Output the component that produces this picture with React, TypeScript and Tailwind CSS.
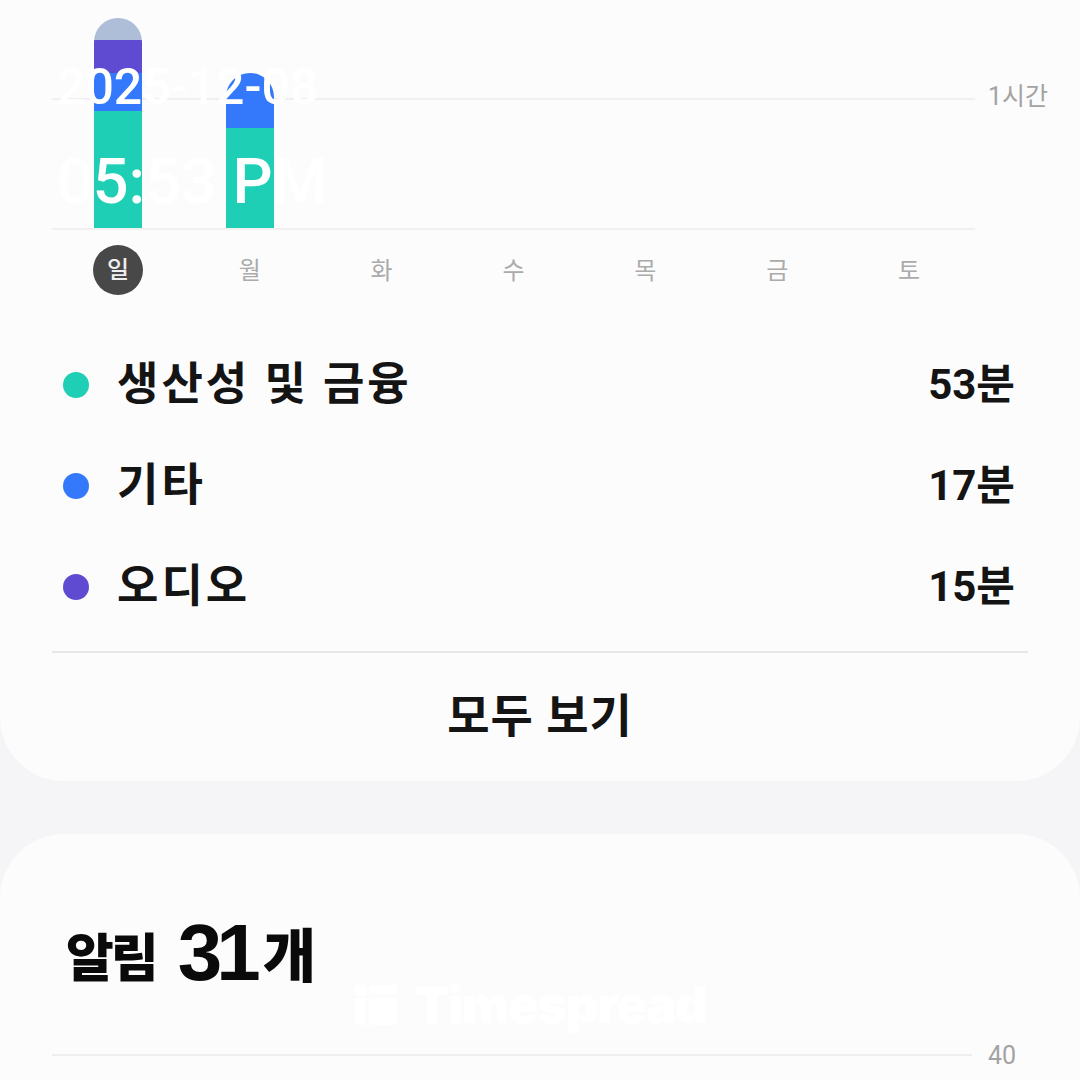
import React from "react";

const FONT = "font-['Roboto','Noto_Sans_CJK_KR',sans-serif]";

type Segment = { color: string; height: number };

const days = ["일", "월", "화", "수", "목", "금", "토"];

// stacked bars per day, bottom segment first
const bars: Segment[][] = [
  [
    { color: "bg-[#1ecfb5]", height: 117 },
    { color: "bg-[#3479fb]", height: 38 },
    { color: "bg-[#5f4bd2]", height: 33 },
    { color: "bg-[#aebdd8]", height: 22 },
  ],
  [
    { color: "bg-[#1ecfb5]", height: 100 },
    { color: "bg-[#3479fb]", height: 55 },
  ],
  [],
  [],
  [],
  [],
  [],
];

const legend = [
  { label: "생산성 및 금융", value: "53분", dot: "bg-[#1ecfb5]" },
  { label: "기타", value: "17분", dot: "bg-[#3479fb]" },
  { label: "오디오", value: "15분", dot: "bg-[#5f4bd2]" },
];

function Bar({ segments }: { segments: Segment[] }) {
  if (segments.length === 0) return null;
  return (
    <div className="flex w-[48px] flex-col-reverse overflow-hidden rounded-t-[24px]">
      {segments.map((s, i) => (
        <div key={i} className={s.color} style={{ height: s.height }} />
      ))}
    </div>
  );
}

function TimespreadMark() {
  return (
    <div className="pointer-events-none absolute left-[355px] top-[980px] flex items-center gap-[18px] text-white">
      <svg width="42" height="40" viewBox="0 0 42 40" fill="#ffffff">
        <rect x="0" y="0" width="11" height="11" rx="3" />
        <rect x="0" y="13" width="11" height="27" rx="1" />
        <rect x="14" y="0" width="28" height="9" rx="1" />
        <rect x="14" y="13" width="28" height="27" rx="1" />
      </svg>
      <span className="text-[50px] font-black leading-none tracking-[-1px] font-['Inter',sans-serif]">
        Timespread
      </span>
    </div>
  );
}

export default function App() {
  return (
    <div className={`relative flex h-[1080px] w-full flex-col overflow-hidden bg-[#f5f5f7] ${FONT}`}>
      {/* usage card */}
      <div className="rounded-b-[64px] bg-[#fcfcfc] pt-[18px]">
        {/* chart */}
        <div className="relative mx-[52px] w-[923px]">
          <div className="absolute left-0 right-0 top-[80px] h-[2px] bg-[#f0f0f0]" />
          <span className="absolute left-[936px] top-[66px] whitespace-nowrap text-[25px] leading-none text-[#a3a3a3]">
            1시간
          </span>
          <div className="relative grid h-[210px] grid-cols-7 items-end">
            {bars.map((b, i) => (
              <div key={i} className="flex justify-center">
                <Bar segments={b} />
              </div>
            ))}
          </div>
          <div className="h-[2px] bg-[#f0f0f0]" />

          {/* days */}
          <div className="mt-[15px] grid grid-cols-7">
            {days.map((d, i) => (
              <div key={d} className="flex justify-center">
                {i === 0 ? (
                  <div className="flex h-[50px] w-[50px] items-center justify-center rounded-full bg-[#484848] text-[24px] font-medium text-[#eeeeee]">
                    {d}
                  </div>
                ) : (
                  <div className="flex h-[52px] items-center text-[24px] text-[#ababab]">
                    {d}
                  </div>
                )}
              </div>
            ))}
          </div>
        </div>

        {/* legend */}
        <div className="mt-[37px] flex flex-col pl-[63px] pr-[65px]">
          {legend.map((row) => (
            <div key={row.label} className="flex h-[101px] items-center">
              <div className={`h-[26px] w-[26px] rounded-full ${row.dot}`} />
              <span className="ml-[28px] text-[45px] font-semibold leading-none tracking-[3px] text-[#141414]">
                {row.label}
              </span>
              <span className="ml-auto text-[42px] font-bold leading-none text-[#141414]">
                {row.value}
              </span>
            </div>
          ))}
        </div>

        <div className="mx-[52px] mt-[14px] h-[2px] bg-[#e7e7e7]" />

        <div className="flex h-[128px] items-center justify-center pb-[2px]">
          <span className="text-[46px] font-bold leading-none tracking-[1px] text-[#141414]">모두 보기</span>
        </div>
      </div>

      {/* notifications card */}
      <div className="mt-[53px] flex-1 rounded-t-[64px] bg-[#fcfcfc] px-[52px] pt-[86px]">
        <div className="flex items-end pl-[14px] font-black leading-none text-[#0a0a0a]">
          <span className="text-[52px] tracking-[-3px]">알림</span>
          <span className="ml-[22px] text-[80px] tracking-[-6px] font-['Liberation_Sans',sans-serif] leading-[0.82]">
            31
          </span>
          <span className="ml-[8px] text-[58px]">개</span>
        </div>
        <div className="relative mt-[68px] w-[920px]">
          <div className="h-[2px] bg-[#efefef]" />
          <span className="absolute left-[936px] top-[-11px] text-[25px] leading-none text-[#a3a3a3]">
            40
          </span>
        </div>
      </div>

      {/* watermark overlay */}
      <div className="pointer-events-none absolute left-[57px] top-[62px] flex flex-col font-medium text-white">
        <span className="text-[50px] leading-none">2025-12-08</span>
        <span className="mt-[38px] text-[63px] leading-none">05:53 PM</span>
      </div>
      <TimespreadMark />
    </div>
  );
}
